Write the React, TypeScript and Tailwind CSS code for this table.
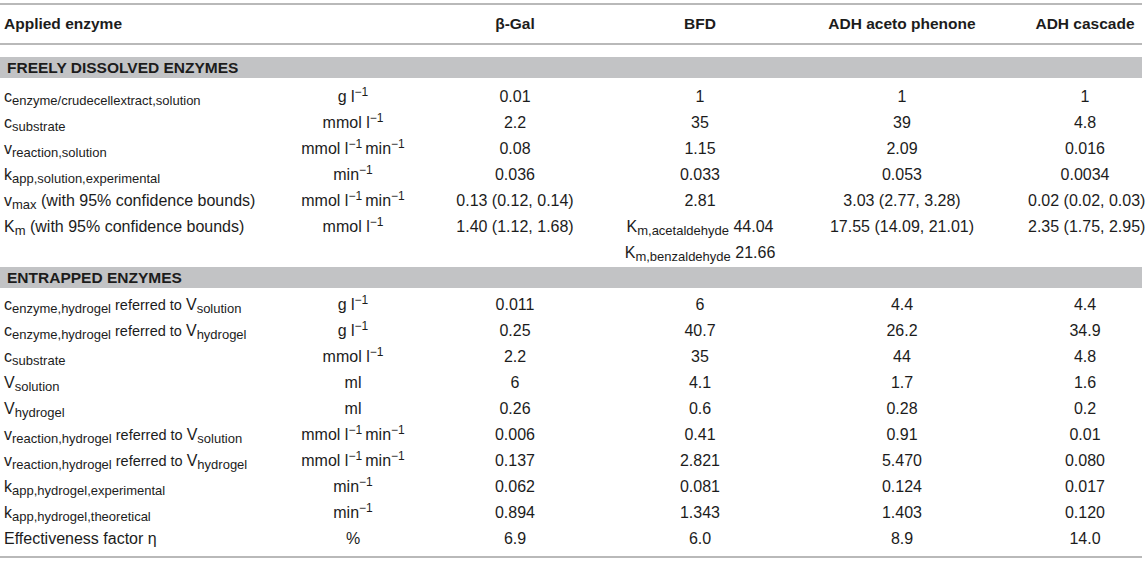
import type { ReactNode } from "react";

const cols = "grid grid-cols-[300px_106px_218px_152px_252px_114px]";

type Row = { label: ReactNode; unit: ReactNode; values: ReactNode[] };

const inv = <sup>−1</sup>;
const gl = <>g l{inv}</>;
const mmol = <>mmol l{inv}</>;
const rate = (
  <>
    mmol l{inv}&thinsp;min{inv}
  </>
);
const perMin = <>min{inv}</>;
const referred = <span className="text-[14.5px]"> referred to </span>;

const freeRows: Row[] = [
  { label: <>c<sub>enzyme/crudecellextract,solution</sub></>, unit: gl, values: ["0.01", "1", "1", "1"] },
  { label: <>c<sub>substrate</sub></>, unit: mmol, values: ["2.2", "35", "39", "4.8"] },
  { label: <>v<sub>reaction,solution</sub></>, unit: rate, values: ["0.08", "1.15", "2.09", "0.016"] },
  { label: <>k<sub>app,solution,experimental</sub></>, unit: perMin, values: ["0.036", "0.033", "0.053", "0.0034"] },
  {
    label: <>v<sub>max</sub> (with 95% confidence bounds)</>,
    unit: rate,
    values: ["0.13 (0.12, 0.14)", "2.81", "3.03 (2.77, 3.28)", "0.02 (0.02, 0.03)"],
  },
  {
    label: <>K<sub>m</sub> (with 95% confidence bounds)</>,
    unit: mmol,
    values: ["1.40 (1.12, 1.68)", <>K<sub>m,acetaldehyde</sub> 44.04</>, "17.55 (14.09, 21.01)", "2.35 (1.75, 2.95)"],
  },
  { label: "", unit: "", values: ["", <>K<sub>m,benzaldehyde</sub> 21.66</>, "", ""] },
];

const trappedRows: Row[] = [
  {
    label: <>c<sub>enzyme,hydrogel</sub>{referred}V<sub>solution</sub></>,
    unit: gl,
    values: ["0.011", "6", "4.4", "4.4"],
  },
  {
    label: <>c<sub>enzyme,hydrogel</sub>{referred}V<sub>hydrogel</sub></>,
    unit: gl,
    values: ["0.25", "40.7", "26.2", "34.9"],
  },
  { label: <>c<sub>substrate</sub></>, unit: mmol, values: ["2.2", "35", "44", "4.8"] },
  { label: <>V<sub>solution</sub></>, unit: "ml", values: ["6", "4.1", "1.7", "1.6"] },
  { label: <>V<sub>hydrogel</sub></>, unit: "ml", values: ["0.26", "0.6", "0.28", "0.2"] },
  {
    label: <>v<sub>reaction,hydrogel</sub>{referred}V<sub>solution</sub></>,
    unit: rate,
    values: ["0.006", "0.41", "0.91", "0.01"],
  },
  {
    label: <>v<sub>reaction,hydrogel</sub>{referred}V<sub>hydrogel</sub></>,
    unit: rate,
    values: ["0.137", "2.821", "5.470", "0.080"],
  },
  { label: <>k<sub>app,hydrogel,experimental</sub></>, unit: perMin, values: ["0.062", "0.081", "0.124", "0.017"] },
  { label: <>k<sub>app,hydrogel,theoretical</sub></>, unit: perMin, values: ["0.894", "1.343", "1.403", "0.120"] },
  { label: "Effectiveness factor η", unit: "%", values: ["6.9", "6.0", "8.9", "14.0"] },
];

function DataRow({ row }: { row: Row }) {
  return (
    <div className={`${cols} h-[26px] items-center whitespace-nowrap`}>
      <div className="pl-[4px]">{row.label}</div>
      <div className="text-center">{row.unit}</div>
      {row.values.map((v, i) => (
        <div key={i} className="text-center">
          {v}
        </div>
      ))}
    </div>
  );
}

function Band({ title }: { title: string }) {
  return (
    <div className="flex h-[21px] items-center bg-[#c2c3c5] pl-[7px] text-[15.5px] font-bold">{title}</div>
  );
}

export default function App() {
  return (
    <div className="h-[568px] w-[1145px] bg-white pt-[3px] font-['Liberation_Sans',Arial,sans-serif] text-[16px] text-[#1c1c1c] [&_sub]:text-[13px] [&_sup]:text-[12px]">
      <div className="w-[1142px]">
        <div className="h-[2px] bg-[#b9b9b9]" />
        <div className={`${cols} h-[38px] items-center text-[15.5px] font-bold`}>
          <div className="pl-[4px]">Applied enzyme</div>
          <div />
          <div className="text-center">β-Gal</div>
          <div className="text-center">BFD</div>
          <div className="text-center">ADH aceto phenone</div>
          <div className="text-center">ADH cascade</div>
        </div>
        <div className="h-[2px] bg-[#b9b9b9]" />

        <div className="mt-[12px]">
          <Band title="FREELY DISSOLVED ENZYMES" />
        </div>
        <div className="mt-[6px]">
          {freeRows.map((r, i) => (
            <DataRow key={i} row={r} />
          ))}
        </div>

        <div className="mt-[1px]">
          <Band title="ENTRAPPED ENZYMES" />
        </div>
        <div className="mt-[4px]">
          {trappedRows.map((r, i) => (
            <DataRow key={i} row={r} />
          ))}
        </div>
        <div className="mt-[4px] h-[2px] bg-[#b9b9b9]" />
      </div>
    </div>
  );
}
